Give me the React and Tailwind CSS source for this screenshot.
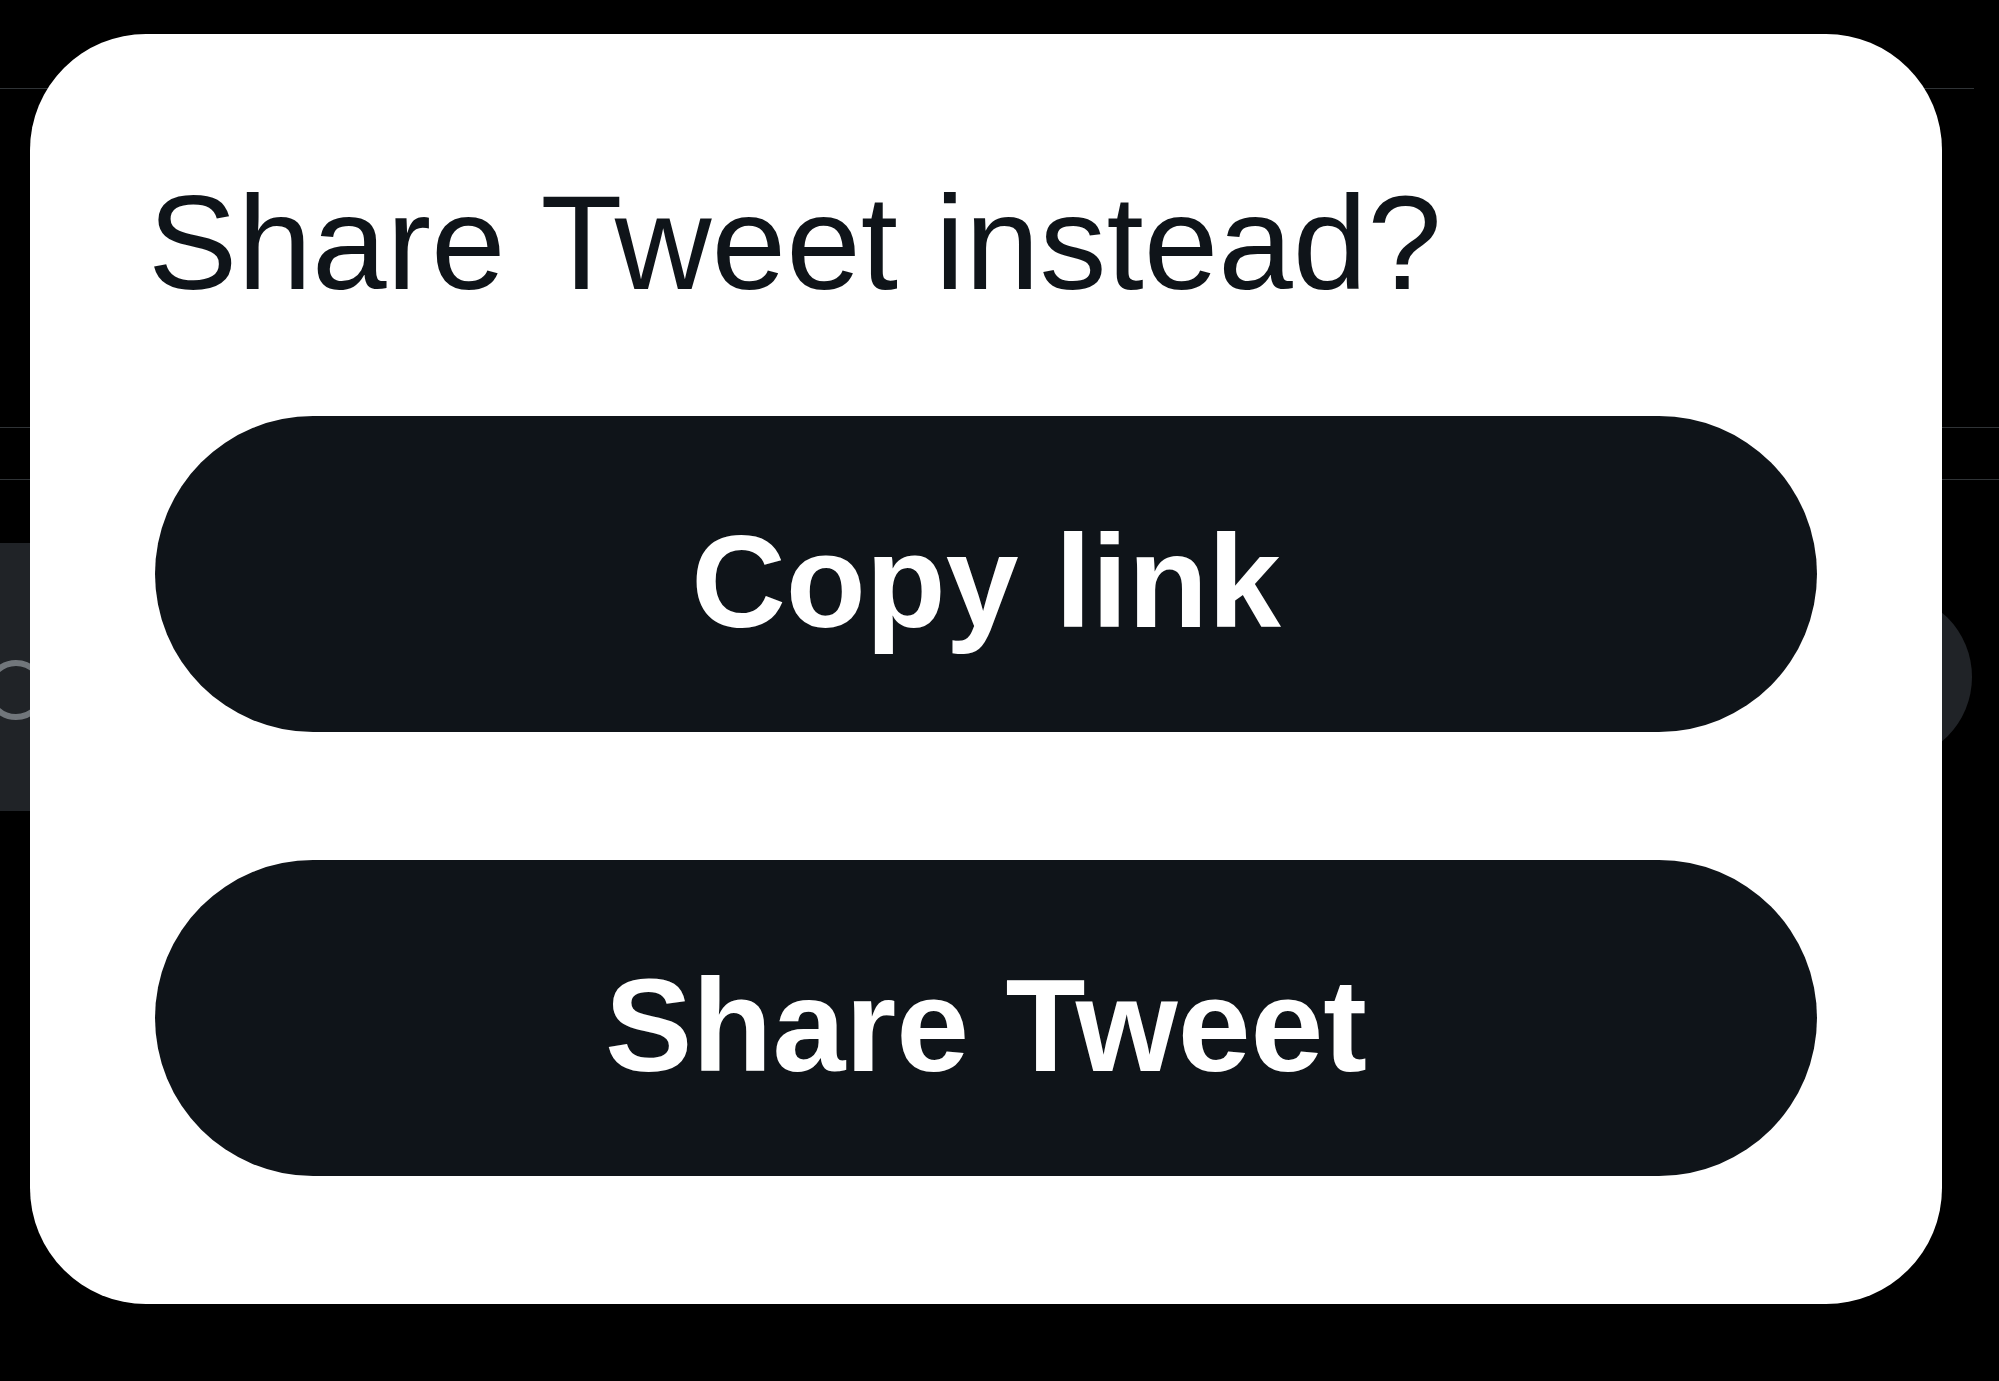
import React from "react";

function SharePrompt({ onCopy, onShare }) {
  return (
    <div className="absolute left-[30px] top-[34px] flex h-[1270px] w-[1912px] flex-col rounded-[116px] bg-white px-[125px] pt-[142px]">
      <h2 className="-ml-[7px] text-[134px] font-normal leading-none text-[#0f1419]">
        Share Tweet instead?
      </h2>

      <button
        onClick={onCopy}
        className="mt-[106px] flex h-[316px] w-full items-center justify-center rounded-full bg-[#0f1419] pt-[14px] text-[131px] font-bold leading-none text-white"
      >
        Copy link
      </button>
      <button
        onClick={onShare}
        className="mt-[128px] flex h-[316px] w-full items-center justify-center rounded-full bg-[#0f1419] pt-[14px] text-[131px] font-bold leading-none text-white"
      >
        Share Tweet
      </button>
    </div>
  );
}

export default function App() {
  return (
    <div className="relative h-screen w-full overflow-hidden bg-black font-['Liberation_Sans',Arial,sans-serif]">
      {/* page underneath the sheet */}
      <div className="pt-[88px]">
        <div className="mr-[25px] h-px bg-[#2f3336]" />
        <div className="mt-[338px] h-px bg-[#2f3336]" />
        <div className="mt-[51px] h-px bg-[#2f3336]" />

        <div className="mt-[63px] flex h-[268px] items-center gap-6">
          {/* search field */}
          <div className="flex h-full flex-1 items-center rounded-r-full bg-[#202327] pt-[26px]">
            <svg className="-ml-[16px]" width="64" height="64" viewBox="0 0 64 64" fill="none">
              <circle cx="32" cy="32" r="27" stroke="#71767b" strokeWidth="6" />
            </svg>
          </div>
          <div className="mr-[27px] h-[168px] w-[168px] rounded-full bg-[#202327]" />
        </div>
      </div>

      <SharePrompt onCopy={() => {}} onShare={() => {}} />
    </div>
  );
}
